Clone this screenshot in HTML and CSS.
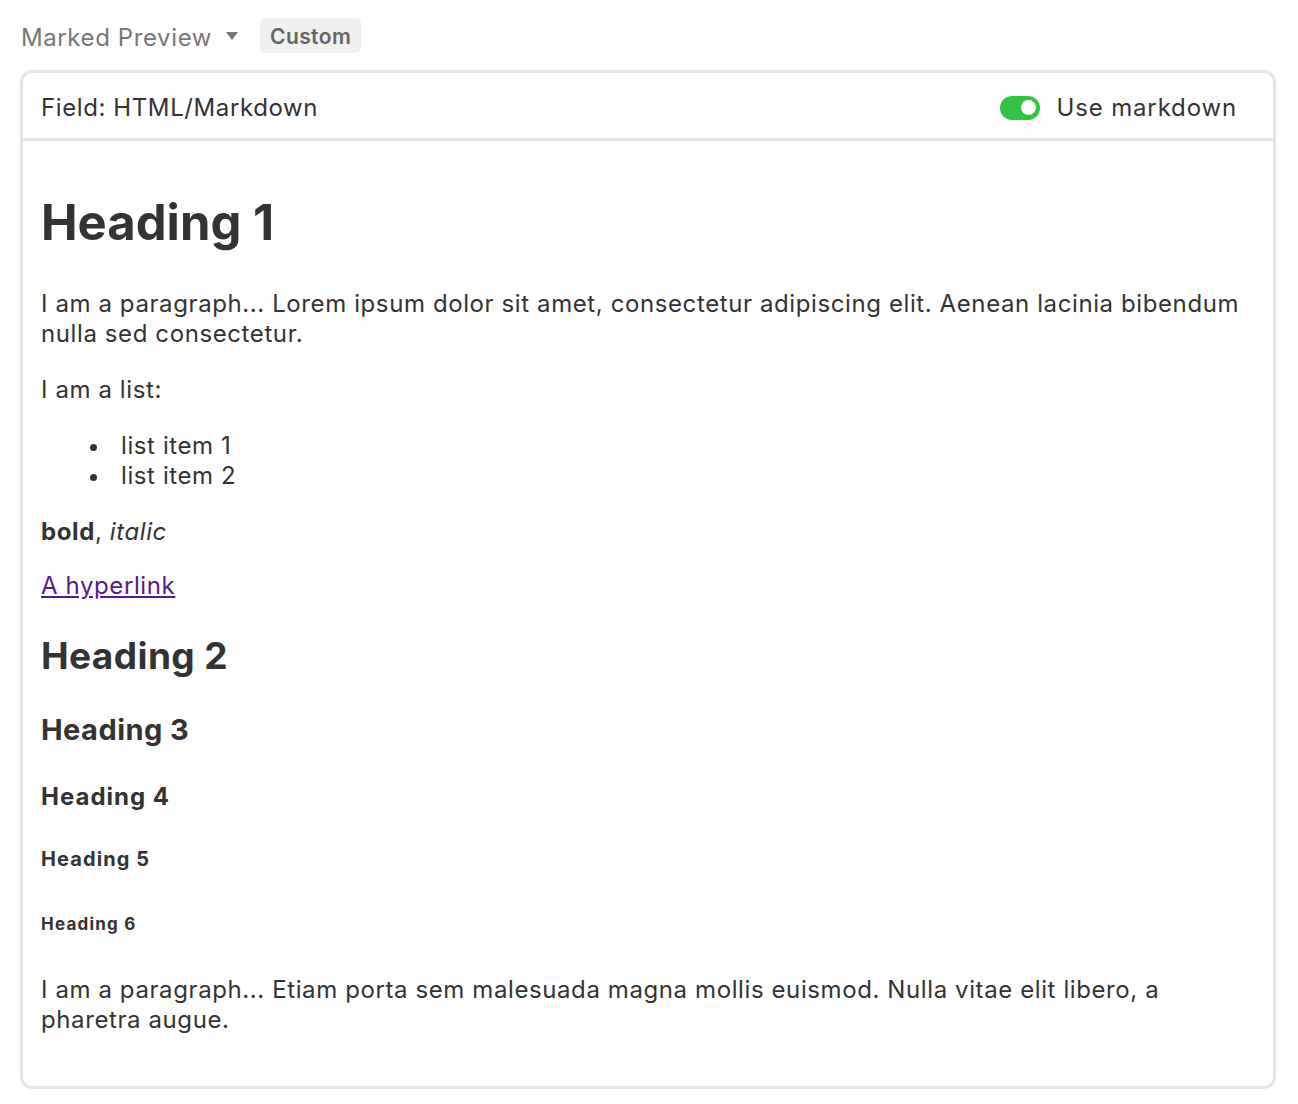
FILE: index.html
```html
<!DOCTYPE html>
<html lang="en">
<head>
<meta charset="utf-8">
<title>Marked Preview</title>
<link rel="stylesheet" href="styles.css">
</head>
<body>
<div class="topbar">
  <div class="picker">
    <span class="picker-label">Marked Preview</span>
    <svg class="caret" width="12" height="8" viewBox="0 0 12 8"><path d="M0 0h12L6 8z" fill="#777"/></svg>
  </div>
  <span class="badge">Custom</span>
</div>
<div class="card">
  <div class="card-header">
    <span class="field">Field: HTML/Markdown</span>
    <div class="toggle-wrap">
      <span class="toggle"><span class="knob"></span></span>
      <span class="toggle-label">Use markdown</span>
    </div>
  </div>
  <div class="card-body">
    <h1 class="h1">Heading 1</h1>
    <p class="p">I am a paragraph... Lorem ipsum dolor sit amet, consectetur adipiscing elit. Aenean lacinia bibendum nulla sed consectetur.</p>
    <p class="p">I am a list:</p>
    <ul class="list">
      <li>list item 1</li>
      <li>list item 2</li>
    </ul>
    <p class="p"><strong>bold</strong>, <em>italic</em></p>
    <p class="p link-line"><a class="link" href="#">A hyperlink</a></p>
    <h2 class="h2">Heading 2</h2>
    <h3 class="h3">Heading 3</h3>
    <h4 class="h4">Heading 4</h4>
    <h5 class="h5">Heading 5</h5>
    <h6 class="h6">Heading 6</h6>
    <p class="p last">I am a paragraph... Etiam porta sem malesuada magna mollis euismod. Nulla vitae elit libero, a pharetra augue.</p>
  </div>
</div>
</body>
</html>
```
FILE: styles.css
```css
html, body {
  margin: 0;
  padding: 0;
  background: #fff;
}
body {
  font-family: Inter, "Noto Sans", "Liberation Sans", sans-serif;
  color: #333;
  padding: 18px 22px 0 20px;
  letter-spacing: 0.6px;
}
.topbar {
  display: flex;
  align-items: center;
  height: 35px;
  margin-bottom: 17px;
}
.picker {
  display: flex;
  align-items: center;
  gap: 14px;
  margin-left: 1px;
}
.picker-label {
  font-size: 24px;
  color: #777;
  padding-top: 3px;
}
.caret {
  margin-top: 1px;
}
.badge {
  margin-left: 22px;
  height: 35px;
  line-height: 37px;
  padding: 0 10px;
  background: #f0f0f0;
  border-radius: 5px;
  color: #666;
  font-size: 21px;
  font-weight: 600;
  letter-spacing: 0.4px;
}
.card {
  border: 3px solid #e5e5e5;
  border-radius: 12px;
  width: 1250px;
}
.card-header {
  display: flex;
  align-items: center;
  justify-content: space-between;
  box-sizing: border-box;
  height: 68px;
  padding: 4px 36px 0 18px;
  border-bottom: 3px solid #e5e5e5;
}
.field {
  font-size: 24px;
}
.toggle-wrap {
  display: flex;
  align-items: center;
  gap: 17px;
}
.toggle {
  display: flex;
  align-items: center;
  justify-content: flex-end;
  width: 40px;
  height: 24px;
  border-radius: 12px;
  background: #2fc443;
  box-sizing: border-box;
  padding-right: 4px;
}
.knob {
  width: 15px;
  height: 15px;
  border-radius: 50%;
  background: #fff;
}
.toggle-label {
  font-size: 24px;
  letter-spacing: 0.85px;
}
.card-body {
  padding: 52px 18px 51px 18px;
}
.h1, .h2, .h3, .h4, .h5, .h6, .p, .list {
  margin: 0;
}
.h1 {
  font-size: 49px;
  line-height: 60px;
  font-weight: 700;
  letter-spacing: 0;
}
.p, .list {
  font-size: 24px;
  line-height: 30px;
  margin-top: 26px;
}
.h1 + .p {
  margin-top: 36px;
}
.p.link-line {
  margin-top: 24px;
}
.list {
  list-style: none;
  padding-left: 80px;
}
.list li::before {
  content: "";
  display: inline-block;
  width: 7px;
  height: 7px;
  border-radius: 50%;
  background: #333;
  margin-left: -31px;
  margin-right: 24px;
  vertical-align: middle;
}
.link {
  color: #551a8b;
}
.h2 {
  font-size: 37px;
  line-height: 45px;
  font-weight: 700;
  margin-top: 32px;
  letter-spacing: 0.4px;
}
.h3 {
  font-size: 29px;
  line-height: 35px;
  font-weight: 700;
  margin-top: 34px;
  letter-spacing: 0.45px;
}
.h4 {
  font-size: 24px;
  line-height: 30px;
  font-weight: 700;
  margin-top: 35px;
  letter-spacing: 1px;
}
.h5 {
  font-size: 20px;
  line-height: 25px;
  font-weight: 700;
  margin-top: 35px;
  letter-spacing: 1.1px;
}
.h6 {
  font-size: 17px;
  line-height: 20px;
  font-weight: 700;
  margin-top: 42px;
  letter-spacing: 1.2px;
}
.p.last {
  margin-top: 41px;
}
```
